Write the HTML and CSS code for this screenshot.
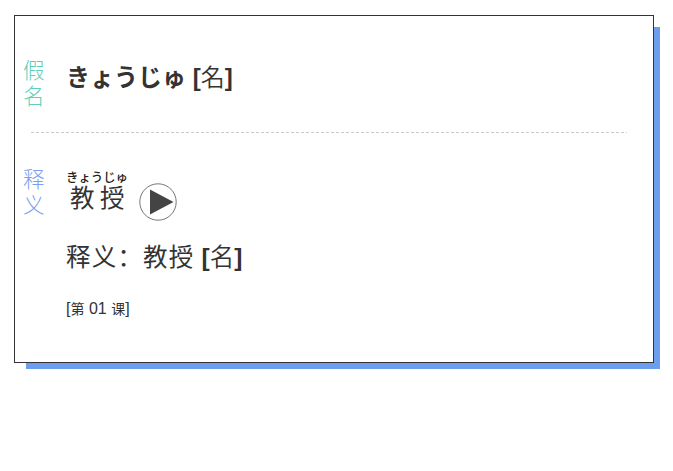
FILE: index.html
```html
<!DOCTYPE html>
<html lang="zh-CN">
<head>
    <meta charset="UTF-8">
    <meta name="viewport" content="width=device-width, initial-scale=1.0">
    <title>教授</title>
    <link rel="stylesheet" href="styles.css">
</head>
<body>

    <div class="card">
        <div class="row kana">
            <div class="label">假名</div>
            <h1 lang="ja">きょうじゅ <span class="pos">[<span class="han">名</span>]</span></h1>
        </div>

        <div class="row meaning">
            <div class="label">释义</div>
            <div class="content">
                <div class="word">
                    <ruby lang="zh-CN">教授<rt lang="ja">きょうじゅ</rt></ruby>
                    <svg class="play" width="38" height="38" viewBox="0 0 38 38">
                        <circle cx="19" cy="19" r="18.2" fill="none" stroke="#777" stroke-width="1"/>
                        <path d="M11 6.5L34.5 19L11 31.5Z" fill="#444"/>
                    </svg>
                </div>
                <div class="explain"><span class="text">释义：教授</span><span class="pos">[<span class="han">名</span>]</span></div>
                <div class="lesson">[<span class="small">第</span> 01 <span class="small">课</span>]</div>
            </div>
        </div>
    </div>

</body>
</html>
```

FILE: styles.css
```css
*{
    box-sizing: border-box;
}
body{
    margin: 0;
    padding: 15px 14px;
    background: #fff;
    color: #333;
    font-family: "Liberation Sans", "Noto Sans CJK SC", sans-serif;
}

.card{
    width: 640px;
    height: 348px;
    padding: 0 26px 0 8px;
    border: 1px solid #333;
    background: #fff;
    box-shadow: 9px 9px 0 -3px #6b9fee;
}

.row{
    display: flex;
}
.label{
    width: 22px;
    margin-right: 21px;
    font-size: 21.5px;
    line-height: 26px;
    font-weight: 300;
    font-family: "Noto Sans CJK SC", sans-serif;
}

.kana{
    height: 117px;
    padding-top: 40px;
    background: repeating-linear-gradient(to right, #ccc 0 3px, transparent 3px 5px) 8px 100% / 597px 1px no-repeat;
}
.kana .label{
    color: #5fcfbb;
}
.kana h1{
    margin: 3px 0 0;
    height: 34px;
    font-size: 24px;
    line-height: 34px;
    font-family: "Liberation Sans", "Noto Sans CJK JP", sans-serif;
}

.meaning{
    padding-top: 33px;
}
.meaning .label{
    margin-top: -1px;
    color: #7b9ff0;
}

.word{
    display: flex;
    height: 54px;
}
ruby{
    display: flex;
    flex-direction: column-reverse;
    justify-content: flex-end;
    width: 62px;
    height: 48px;
    font-size: 24.5px;
    line-height: 26px;
    letter-spacing: 5.5px;
    text-indent: 4px;
    white-space: nowrap;
    font-family: "Noto Sans CJK SC", sans-serif;
}
rt{
    display: block;
    margin: 2px 0 -2px;
    font-size: 12.4px;
    line-height: 18px;
    letter-spacing: 0;
    text-indent: 0;
    font-weight: 500;
    color: #222;
    font-family: "Noto Sans CJK JP", sans-serif;
}
.play{
    margin: 17px 0 0 11px;
}

.pos{
    font-weight: bold;
}
.han{
    font-weight: 350;
    font-family: "Noto Sans CJK SC", sans-serif;
}

.explain{
    height: 36px;
    margin-top: 18px;
    font-size: 24.5px;
    line-height: 36px;
}
.explain .text{
    margin-right: 7px;
    letter-spacing: 1.2px;
}

.lesson{
    margin-top: 24px;
    font-size: 16px;
    line-height: 22px;
}
.small{
    font-size: 14px;
}
```
